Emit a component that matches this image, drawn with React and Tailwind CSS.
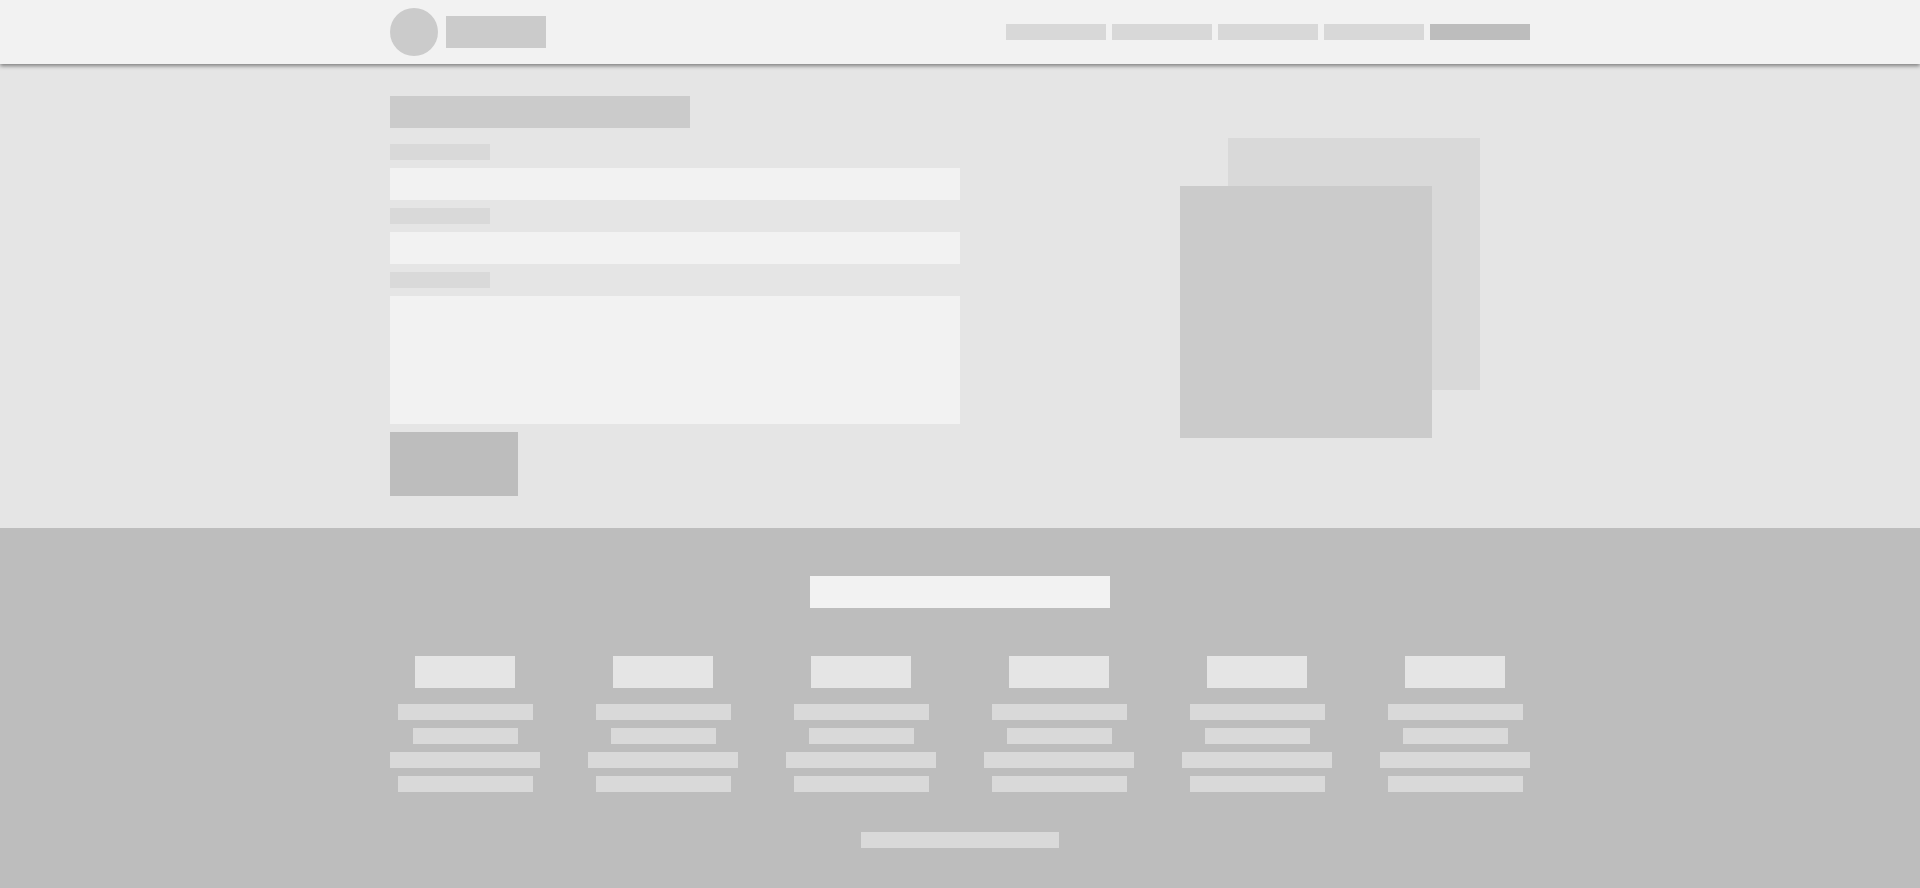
import React from 'react';

const navItems = [
  { active: false },
  { active: false },
  { active: false },
  { active: false },
  { active: true },
];

const footerColumns = [0, 1, 2, 3, 4, 5];
const lineWidths = ['w-[135px]', 'w-[105px]', 'w-[150px]', 'w-[135px]'];

function Field({ tall }) {
  return (
    <div className="flex flex-col gap-2">
      <div className="w-[100px] h-4 bg-[#d9d9d9]"></div>
      <div className={`w-full bg-[#f2f2f2] ${tall ? 'h-32' : 'h-8'}`}></div>
    </div>
  );
}

export default function App() {
  return (
    <div className="min-h-screen bg-[#e5e5e5] font-['Liberation_Sans',sans-serif]">
      {/* Header */}
      <header className="relative z-10 bg-[#f2f2f2] shadow-[0_2px_4px_rgba(0,0,0,0.45)]">
        <div className="w-[1140px] mx-auto h-16 flex items-center justify-between">
          <div className="flex items-center gap-2">
            <div className="w-12 h-12 rounded-full bg-[#cbcbcb]"></div>
            <div className="w-[100px] h-8 bg-[#cbcbcb]"></div>
          </div>
          <nav className="flex items-center gap-[6px]">
            {navItems.map((item, idx) => (
              <div
                key={idx}
                className={`w-[100px] h-4 ${item.active ? 'bg-[#bdbdbd]' : 'bg-[#d8d8d8]'}`}
              ></div>
            ))}
          </nav>
        </div>
      </header>

      {/* Contact section */}
      <section className="bg-[#e5e5e5] pt-8 pb-8">
        <div className="w-[1140px] mx-auto flex">
          <div className="w-[570px] flex flex-col">
            <div className="w-[300px] h-8 bg-[#cbcbcb] mb-4"></div>
            <div className="flex flex-col gap-2">
              <Field />
              <Field />
              <Field tall />
              <div className="w-32 h-16 bg-[#bdbdbd]"></div>
            </div>
          </div>
          <div className="flex-1">
            <div className="relative w-[300px] h-[300px] ml-[220px] mt-[42px]">
              <div className="absolute left-[48px] top-0 w-[252px] h-[252px] bg-[#d9d9d9]"></div>
              <div className="absolute left-0 top-[48px] w-[252px] h-[252px] bg-[#cbcbcb]"></div>
            </div>
          </div>
        </div>
      </section>

      {/* Footer */}
      <footer className="bg-[#bdbdbd] pt-12 pb-10">
        <div className="w-[300px] h-8 bg-[#f2f2f2] mx-auto"></div>
        <div className="w-[1188px] mx-auto mt-12 grid grid-cols-6">
          {footerColumns.map((col) => (
            <div key={col} className="flex flex-col items-center">
              <div className="w-[100px] h-8 bg-[#e5e5e5] mb-4"></div>
              <div className="flex flex-col items-center gap-2">
                {lineWidths.map((w, idx) => (
                  <div key={idx} className={`${w} h-4 bg-[#d9d9d9]`}></div>
                ))}
              </div>
            </div>
          ))}
        </div>
        <div className="w-[198px] h-4 bg-[#d9d9d9] mx-auto mt-10"></div>
      </footer>
    </div>
  );
}
